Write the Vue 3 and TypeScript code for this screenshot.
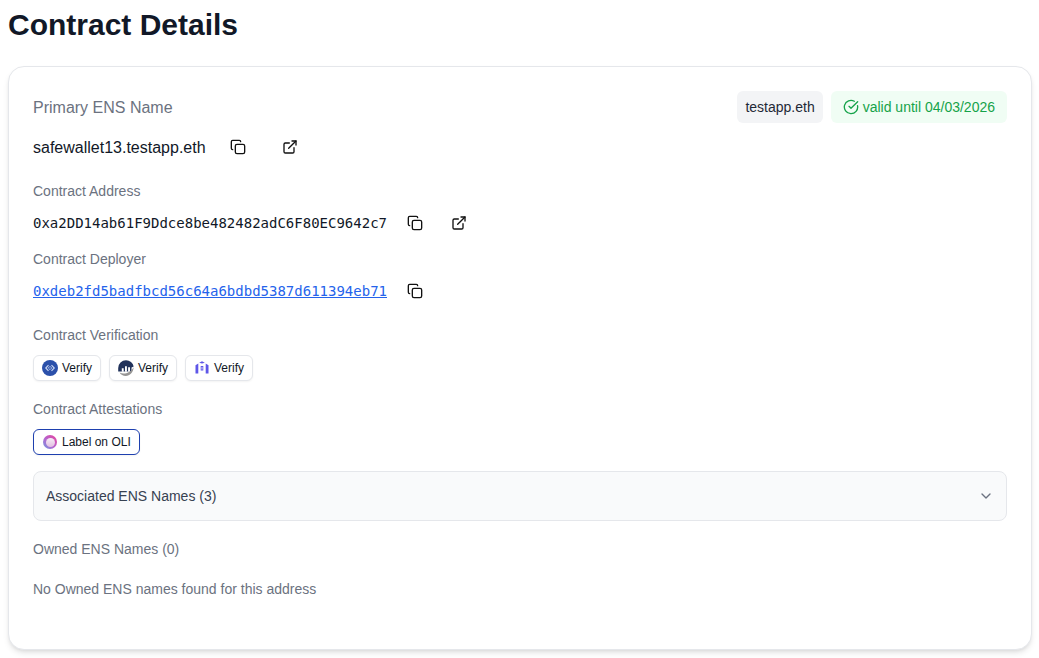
<script setup lang="ts">
const verifiers = ['a', 'b', 'c']
</script>

<template>
  <div class="page">
    <h1 class="title">Contract Details</h1>
    <section class="card">
      <div class="top-row">
        <span class="primary-label">Primary ENS Name</span>
        <div class="badges">
          <span class="badge grey">testapp.eth</span>
          <span class="badge green">
            <svg width="16" height="16" viewBox="0 0 24 24" fill="none" stroke="currentColor" stroke-width="2" stroke-linecap="round" stroke-linejoin="round"><path d="M21.8 10A10 10 0 1 1 17 3.34" /><path d="m9 11 3 3L22 4" /></svg>
            valid until 04/03/2026
          </span>
        </div>
      </div>
      <div class="name-row">
        <span class="ens-name">safewallet13.testapp.eth</span>
        <svg class="icon first" width="16" height="16" viewBox="0 0 24 24" fill="none" stroke="currentColor" stroke-width="2" stroke-linecap="round" stroke-linejoin="round"><rect x="8" y="8" width="14" height="14" rx="2.5" /><path d="M4 16c-1.1 0-2-.9-2-2V4c0-1.1.9-2 2-2h10c1.1 0 2 .9 2 2" /></svg>
        <svg class="icon second" width="16" height="16" viewBox="0 0 24 24" fill="none" stroke="currentColor" stroke-width="2" stroke-linecap="round" stroke-linejoin="round"><path d="M15 3h6v6" /><path d="M10 14 21 3" /><path d="M18 13v6a2 2 0 0 1-2 2H5a2 2 0 0 1-2-2V8a2 2 0 0 1 2-2h6" /></svg>
      </div>

      <div class="label address-label">Contract Address</div>
      <div class="mono-row">
        <span class="mono">0xa2DD14ab61F9Ddce8be482482adC6F80EC9642c7</span>
        <svg class="icon mono-first" width="16" height="16" viewBox="0 0 24 24" fill="none" stroke="currentColor" stroke-width="2" stroke-linecap="round" stroke-linejoin="round"><rect x="8" y="8" width="14" height="14" rx="2.5" /><path d="M4 16c-1.1 0-2-.9-2-2V4c0-1.1.9-2 2-2h10c1.1 0 2 .9 2 2" /></svg>
        <svg class="icon mono-second" width="16" height="16" viewBox="0 0 24 24" fill="none" stroke="currentColor" stroke-width="2" stroke-linecap="round" stroke-linejoin="round"><path d="M15 3h6v6" /><path d="M10 14 21 3" /><path d="M18 13v6a2 2 0 0 1-2 2H5a2 2 0 0 1-2-2V8a2 2 0 0 1 2-2h6" /></svg>
      </div>

      <div class="label deployer-label">Contract Deployer</div>
      <div class="mono-row">
        <a class="mono link" href="#">0xdeb2fd5badfbcd56c64a6bdbd5387d611394eb71</a>
        <svg class="icon mono-first" width="16" height="16" viewBox="0 0 24 24" fill="none" stroke="currentColor" stroke-width="2" stroke-linecap="round" stroke-linejoin="round"><rect x="8" y="8" width="14" height="14" rx="2.5" /><path d="M4 16c-1.1 0-2-.9-2-2V4c0-1.1.9-2 2-2h10c1.1 0 2 .9 2 2" /></svg>
      </div>

      <div class="label verification-label">Contract Verification</div>
      <div class="buttons">
        <button v-for="v in verifiers" :key="v" class="chip">
          <svg v-if="v === 'a'" width="16" height="16" viewBox="0 0 16 16" fill="none"><circle cx="8" cy="8" r="8" fill="#2b50aa" /><path d="M6.500 5.200 3.800 8l2.700 2.800M9.500 5.200 12.200 8l-2.700 2.800" stroke="#c6d3f0" stroke-width="1.200" /><path d="M8 6.300 9.700 8 8 9.700 6.300 8z" stroke="#c6d3f0" stroke-width=".8" /></svg>
          <svg v-else-if="v === 'b'" width="16" height="16" viewBox="0 0 16 16" fill="none"><path d="M0.200 11.500V8A7.800 7.800 0 0 1 8 0.200 7.800 7.800 0 0 1 15.700 6.600L13.500 7.600V11.500z" fill="#21325b" /><path d="M3.800 8.200h1.900v3.500H3.800zM7 6.300h1.900v5.400H7zM10.100 7.300h1.900v4.400h-1.900z" fill="#fff" /><path d="M1.500 12.400c3.700 2.100 10 1.600 14.200-5.200-.4 5-3.800 8.700-7.900 8.700-2.700 0-5-1.300-6.300-3.500z" fill="#979695" /></svg>
          <svg v-else width="16" height="16" viewBox="0 0 16 16" fill="none"><path d="M1.500 5.200 4.300 3.400v10.100H1.500zM14.500 5.200l-2.800-1.800v10.100h2.800z" fill="#5e56e8" /><path d="M5.200 2.800 8 1.200l2.800 1.600L8 3.600z" fill="#5e56e8" /><path d="M6.700 6h2.600v4.500H6.700z" fill="#5e56e8" /><path d="M7.500 7h1v2.500h-1z" fill="#dcdafa" /></svg>
          Verify
        </button>
      </div>

      <div class="label attest-label">Contract Attestations</div>
      <div class="buttons">
        <button class="chip oli">
          <span class="oli-logo"><span class="oli-inner"></span></span>
          Label on OLI
        </button>
      </div>

      <div class="accordion">
        <span>Associated ENS Names (3)</span>
        <svg width="16" height="16" viewBox="0 0 24 24" fill="none" stroke="#6b7280" stroke-width="2" stroke-linecap="round" stroke-linejoin="round"><path d="m6 9 6 6 6-6" /></svg>
      </div>

      <div class="owned">Owned ENS Names (0)</div>
      <div class="empty">No Owned ENS names found for this address</div>
    </section>
  </div>
</template>

<style>
html, body { margin: 0; background: #fff; }
</style>

<style scoped>
.page {
  width: 1039px;
  height: 658px;
  overflow: hidden;
  box-sizing: border-box;
  padding: 8px 7px 0 8px;
  font-family: "Liberation Sans", Arial, sans-serif;
  color: #111827;
}
.title {
  margin: 0;
  font-size: 30px;
  line-height: 34px;
  font-weight: 700;
  color: #111827;
}
.card {
  margin-top: 24px;
  height: 584px;
  box-sizing: border-box;
  padding: 24px;
  background: #fff;
  border: 1px solid #e5e7eb;
  border-radius: 16px;
  box-shadow: 0 4px 6px -1px rgba(0, 0, 0, .1), 0 2px 4px -2px rgba(0, 0, 0, .1);
}
.top-row { display: flex; justify-content: space-between; align-items: center; height: 32px; }
.primary-label { font-size: 16px; color: #6b7280; padding-top: 2px; }
.badges { display: flex; gap: 8px; }
.badge {
  display: inline-flex; align-items: center; gap: 4px;
  height: 32px; padding: 0 8px; border-radius: 6px; font-size: 14px;
}
.grey { background: #f3f4f6; color: #1f2937; }
.green { padding: 0 12px; background: #f0fdf4; color: #16a34a; }
.name-row { display: flex; align-items: center; height: 24px; margin-top: 12px; }
.ens-name { font-size: 16px; color: #111827; width: 197px; padding-top: 2px; }
.icon { color: #111; flex: none; }
.second { margin-left: 36px; }
.label { font-size: 14px; line-height: 20px; color: #6b7280; }
.address-label { margin-top: 22px; }
.mono-row { display: flex; align-items: center; height: 24px; margin-top: 10px; }
.mono {
  width: 354px;
  font-family: "DejaVu Sans Mono", monospace;
  font-size: 14px;
  color: #111827;
}
.link { color: #2563eb; text-decoration: underline; }
.mono-first { margin-left: 20px; }
.mono-second { margin-left: 28px; }
.deployer-label { margin-top: 14px; }
.verification-label { margin-top: 22px; }
.buttons { display: flex; gap: 8px; margin-top: 10px; }
.chip {
  display: inline-flex; align-items: center; gap: 4px;
  height: 26px; padding: 0 8px; box-sizing: border-box;
  background: #fff; border: 1px solid #e5e7eb; border-radius: 6px;
  font-family: inherit; font-size: 12px; color: #111827;
  box-shadow: 0 1px 2px rgba(0, 0, 0, .05);
}
.oli { border-color: #1e40af; padding: 0 8px 0 9px; gap: 5px; }
.oli-logo {
  width: 14px; height: 14px; border-radius: 50%;
  background: linear-gradient(45deg, #6f9be0, #b565cf 45%, #e8409a);
  display: inline-flex; align-items: center; justify-content: center;
}
.oli-inner { width: 9px; height: 9px; border-radius: 50%; background: linear-gradient(#f6eef6, #e2bfe2); }
.attest-label { margin-top: 18px; }
.accordion {
  margin-top: 16px;
  height: 50px; box-sizing: border-box;
  display: flex; align-items: center; justify-content: space-between;
  padding: 0 12px;
  background: #f9fafb; border: 1px solid #e5e7eb; border-radius: 8px;
  font-size: 14px; color: #374151;
}
.owned { margin-top: 18px; font-size: 14px; line-height: 20px; color: #6b7280; }
.empty { margin-top: 20px; font-size: 14px; line-height: 20px; color: #6b7280; }
</style>
